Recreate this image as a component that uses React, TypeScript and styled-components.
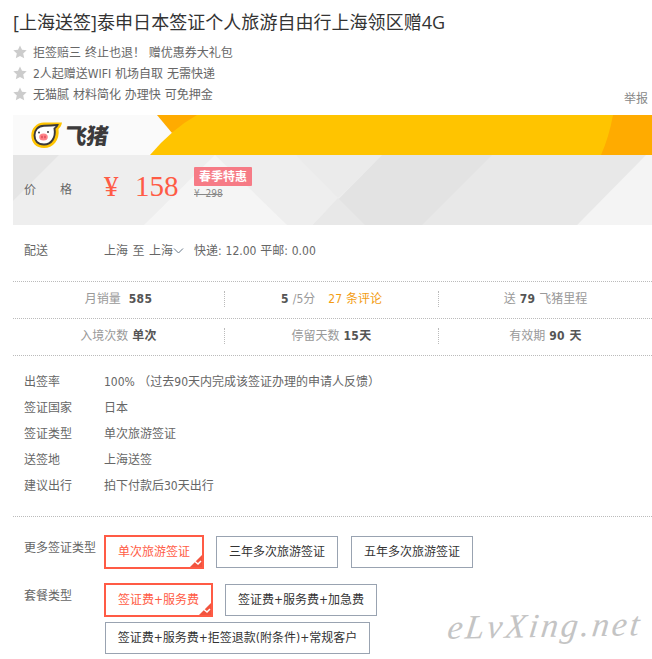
import React from 'react';
import styled, { createGlobalStyle } from 'styled-components';

const Global = createGlobalStyle`
  * { box-sizing: border-box; }
  body {
    margin: 0;
    background: #fff;
    color: #666;
    font: 12px/20px "DejaVu Sans Condensed", "Noto Sans CJK SC", sans-serif;
  }
`;

const Page = styled.main`
  width: 652px;
  height: 659px;
  padding-left: 13px;
  white-space: nowrap;
`;

const Header = styled.header`
  height: 115px;
  padding-top: 10px;
  display: grid;
  grid-template-columns: 1fr auto;
  grid-template-rows: 32px 1fr;
`;

const Title = styled.h1`
  grid-column: 1 / 3;
  margin: 0;
  font: 400 18px/24px "Open Sans", "Noto Sans CJK SC", sans-serif;
  letter-spacing: 0.04px;
  color: #333;
`;

const Perks = styled.ul`
  margin: 0;
  padding: 0;
  list-style: none;
`;

const Perk = styled.li`
  display: flex;
  align-items: center;
  gap: 6px;
  height: 21px;
  word-spacing: 0.5px;
  svg { width: 14px; height: 14px; margin-top: -2px; }
`;

const Report = styled.a`
  align-self: end;
  padding: 0 4px 6px 0;
  color: #888;
`;

const Banner = styled.div`
  display: grid;
  height: 40px;
  > * { grid-area: 1 / 1; }
`;

const Brand = styled.div`
  display: flex;
  align-items: center;
  padding-left: 18px;
  gap: 3px;
`;

const BrandName = styled.span`
  padding-bottom: 3px;
  font: 900 22px/36px "Noto Sans CJK SC", sans-serif;
  letter-spacing: -0.5px;
  color: #3c3a3b;
  transform: skewX(-8deg);
`;

const PricePanel = styled.section`
  display: grid;
  height: 70px;
  > * { grid-area: 1 / 1; }
`;

const PriceRow = styled.div`
  display: flex;
  align-items: flex-start;
`;

const PriceLabel = styled.span`
  display: flex;
  justify-content: space-between;
  width: 48px;
  margin: 25px 32px 0 11px;
`;

const Price = styled.strong`
  display: flex;
  width: 90px;
  padding-top: 13px;
  color: #ff5b45;
  font: 400 29px/36px "Liberation Serif", serif;
  span { width: 31px; }
`;

const Deal = styled.div`
  padding-top: 12px;
`;

const DealTag = styled.div`
  width: 58px;
  height: 19px;
  border-radius: 1px;
  background: #f67b86;
  color: #fff;
  font-weight: 700;
  line-height: 20px;
  text-align: center;
`;

const OldPrice = styled.del`
  display: block;
  color: #888;
  font: 10px/15px "DejaVu Sans Condensed", sans-serif;
  word-spacing: 3px;
`;

const Delivery = styled.section`
  display: flex;
  height: 56px;
  padding: 16px 0 0 11px;
`;

const Label = styled.span`
  flex: none;
  width: 80px;
`;

const Route = styled.span`
  display: flex;
  align-items: center;
  height: 20px;
  margin-right: 10px;
  word-spacing: 1.1px;
`;

const Fees = styled.span`
  word-spacing: 0.4px;
`;

const Stats = styled.section`
  border-bottom: 1px dotted #bbb;
`;

const StatRow = styled.div`
  display: grid;
  grid-template-columns: 212px 214px 213px;
  height: 37px;
  border-top: 1px dotted #bbb;
`;

const Stat = styled.div`
  height: 16px;
  margin-top: 9px;
  line-height: 16px;
  text-align: center;
  color: #999;
  border-right: 1px dotted #bbb;
  word-spacing: 0.6px;
  &:last-child { border: 0; }
  b { color: #555; letter-spacing: 0.3px; }
  em { color: #f39c11; font-style: normal; margin-left: 9px; }
`;

const Details = styled.dl`
  margin: 0;
  height: 161px;
  padding: 13px 0 0 11px;
  border-bottom: 1px dotted #bbb;
`;

const Detail = styled.div`
  display: flex;
  height: 26px;
  line-height: 26px;
  dd { margin: 0; }
`;

const Choices = styled.section`
  padding: 18px 0 0 11px;
`;

const ChoiceRow = styled.div`
  display: flex;
  min-height: 48px;
  > ${Label} { padding-top: 3px; }
`;

const Options = styled.div`
  display: flex;
  flex-wrap: wrap;
  align-content: flex-start;
  gap: 4px 12px;
  width: 420px;
`;

const Option = styled.button<{ $width: number; $selected?: boolean; $gap?: number }>`
  display: grid;
  width: ${p => p.$width}px;
  height: ${p => (p.$selected ? 34 : 32)}px;
  margin: ${p => (p.$selected ? '0' : '1px')} 0 0 ${p => p.$gap ?? 0}px;
  padding: 0;
  border: ${p => (p.$selected ? '2px solid #ff5b45' : '1px solid #99a3b1')};
  background: #fff;
  color: ${p => (p.$selected ? '#ff5b45' : '#333')};
  font: inherit;
  align-items: center;
  justify-items: center;
  > * { grid-area: 1 / 1; }
  svg { align-self: end; justify-self: end; }
`;

const Watermark = styled.div`
  position: absolute;
  left: 448px;
  top: 605px;
  font: italic 34px/42px "Liberation Serif", serif;
  letter-spacing: 2.8px;
  color: #c4c4c4;
  transform: skewX(-8deg) rotate(-1deg);
`;

const Star = () => (
  <svg viewBox="0 0 14 14">
    <path d="M7 .5l2 4.3 4.7.5-3.5 3.2 1 4.7L7 10.9l-4.2 2.3 1-4.7L.3 5.3 5 4.8z" fill="#ccc" />
  </svg>
);

const PigLogo = () => (
  <svg width="31" height="28" viewBox="0 0 31 28">
    <path d="M13 1.500H31c-.5 3-1.500 4.500-3.500 6.500C29 19.500 22 27 13 27 5 27 .3 21.500 .3 14.500S5.500 1.500 13 1.500z" fill="#ffc400" />
    <path d="M13 4.700c5 0 9-.2 13.500-.7-.5 1.500-1.500 2.500-3 3.500 1.500 9-3 16-10.500 16C6.500 23.500 3.500 19.500 3.500 14.300S7 4.700 13 4.700z" fill="#fff" stroke="#3c3a3b" strokeWidth="1.900" />
    <ellipse cx="12.500" cy="16" rx="4.300" ry="3.500" fill="#ff858b" />
    <path d="M11 14.700v2.600M14 14.700v2.600" stroke="#d6404d" strokeWidth="1.200" />
    <circle cx="8" cy="11.500" r="1" fill="#3c3a3b" />
    <circle cx="17" cy="11" r="1" fill="#3c3a3b" />
  </svg>
);

const Tick = () => (
  <svg width="12" height="12" viewBox="0 0 12 12">
    <path d="M12 0v12H0z" fill="#f2543f" />
    <path d="M5 6.500l3 2.500L11 6" fill="none" stroke="#fff" strokeWidth="1.500" />
  </svg>
);

const perks = ['拒签赔三 终止也退！ 赠优惠券大礼包', '2人起赠送WIFI 机场自取 无需快递', '无猫腻 材料简化 办理快 可免押金'];

const details = [
  ['出签率', '100% （过去90天内完成该签证办理的申请人反馈）'],
  ['签证国家', '日本'],
  ['签证类型', '单次旅游签证'],
  ['送签地', '上海送签'],
  ['建议出行', '拍下付款后30天出行'],
];

export default function App() {
  return (
    <>
      <Global />
      <Page>
        <Header>
          <Title>[上海送签]泰申日本签证个人旅游自由行上海领区赠4G</Title>
          <Perks>
            {perks.map(text => (
              <Perk key={text}><Star /><span>{text}</span></Perk>
            ))}
          </Perks>
          <Report>举报</Report>
        </Header>

        <Banner>
          <svg width="639" height="40">
            <path d="M0 0h639v40H0z" fill="#fafafa" />
            <path d="M144 0h60l-45 18z" fill="#ffab00" />
            <path d="M137 40Q159 14 184 0H639V40z" fill="#ffc400" />
            <path d="M600 0Q596 22 588 40H639V0z" fill="#ffab00" />
          </svg>
          <Brand><PigLogo /><BrandName>飞猪</BrandName></Brand>
        </Banner>

        <PricePanel>
          <svg width="639" height="70">
            <path d="M0 0h639v70H0z" fill="#eee" />
            <path d="M0 0h46L0 46z" fill="#e5e5e5" />
            <path d="M202 0l72 70H131z" fill="#f5f5f5" />
            <path d="M283 0h86l-44 43z" fill="#ebebeb" />
            <path d="M369 0H639V70H300z" fill="#e3e3e3" />
            <path d="M325 43l27 27h-52z" fill="#e8e8e8" />
            <path d="M479 0H634L564 70H409z" fill="#e8e8e8" />
            <path d="M633 0h6v70h-75z" fill="#f4f4f4" />
          </svg>
          <PriceRow>
            <PriceLabel><span>价</span><span>格</span></PriceLabel>
            <Price><span>¥</span>158</Price>
            <Deal>
              <DealTag>春季特惠</DealTag>
              <OldPrice>¥ 298</OldPrice>
            </Deal>
          </PriceRow>
        </PricePanel>

        <Delivery>
          <Label>配送</Label>
          <Route>
            上海 至 上海
            <svg width="11" height="8"><path d="M1 1.500l4.500 4.500L10 1.500" fill="none" stroke="#678" /></svg>
          </Route>
          <Fees>快递: 12.00 平邮: 0.00</Fees>
        </Delivery>

        <Stats>
          <StatRow>
            <Stat>月销量&nbsp; <b>585</b></Stat>
            <Stat><b>5</b> /5分 <em>27 条评论</em></Stat>
            <Stat>送 <b>79</b> 飞猪里程</Stat>
          </StatRow>
          <StatRow>
            <Stat>入境次数 <b>单次</b></Stat>
            <Stat>停留天数 <b>15天</b></Stat>
            <Stat>有效期 <b>90 天</b></Stat>
          </StatRow>
        </Stats>

        <Details>
          {details.map(([name, value]) => (
            <Detail key={name}><Label as="dt">{name}</Label><dd>{value}</dd></Detail>
          ))}
        </Details>

        <Choices>
          <ChoiceRow>
            <Label>更多签证类型</Label>
            <Options>
              <Option $width={100} $selected><span>单次旅游签证</span><Tick /></Option>
              <Option $width={122}>三年多次旅游签证</Option>
              <Option $width={122} $gap={1}>五年多次旅游签证</Option>
            </Options>
          </ChoiceRow>
          <ChoiceRow>
            <Label>套餐类型</Label>
            <Options>
              <Option $width={109} $selected><span>签证费+服务费</span><Tick /></Option>
              <Option $width={152}>签证费+服务费+加急费</Option>
              <Option $width={265} $gap={1}>签证费+服务费+拒签退款(附条件)+常规客户</Option>
            </Options>
          </ChoiceRow>
        </Choices>

        <Watermark>eLvXing.net</Watermark>
      </Page>
    </>
  );
}
